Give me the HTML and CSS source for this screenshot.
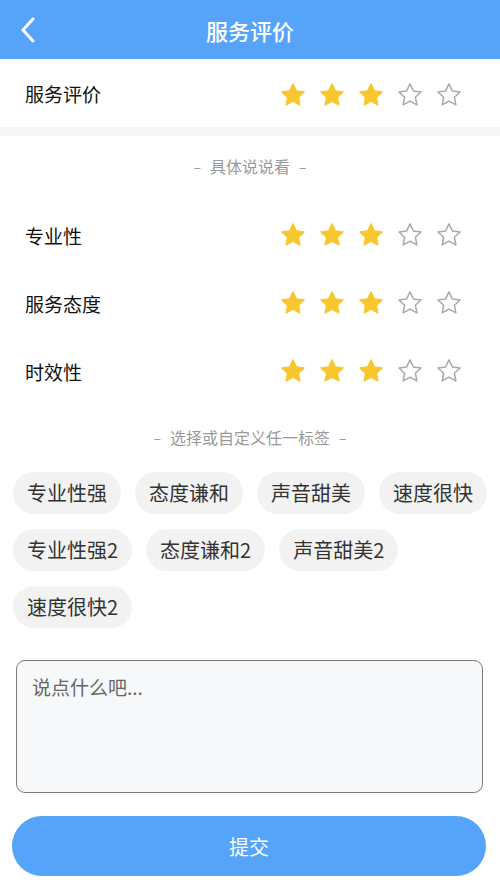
FILE: index.html
```html
<!DOCTYPE html>
<html lang="zh">
<head>
  <meta charset="UTF-8">
  <title>服务评价</title>
  <link rel="stylesheet" href="styles.css">
</head>
<body>
  <div class="header">
    <svg class="back" width="16" height="26" viewBox="0 0 16 26"><path d="M13 2 L3 13 L13 24" fill="none" stroke="#fff" stroke-width="3" stroke-linecap="round" stroke-linejoin="round"/></svg>
    <h1>服务评价</h1>
  </div>

  <div class="rate-row main-row">
    <span class="label">服务评价</span>
    <div class="stars" data-score="3"></div>
  </div>
  <div class="divider"></div>

  <div class="section-title"><span class="dash">–</span>具体说说看<span class="dash">–</span></div>
  <div class="rate-row">
    <span class="label">专业性</span>
    <div class="stars" data-score="3"></div>
  </div>
  <div class="rate-row">
    <span class="label">服务态度</span>
    <div class="stars" data-score="3"></div>
  </div>
  <div class="rate-row">
    <span class="label">时效性</span>
    <div class="stars" data-score="3"></div>
  </div>

  <div class="section-title tags-title"><span class="dash">–</span>选择或自定义任一标签<span class="dash">–</span></div>
  <div class="tags">
    <span class="tag">专业性强</span>
    <span class="tag">态度谦和</span>
    <span class="tag">声音甜美</span>
    <span class="tag">速度很快</span>
    <span class="tag">专业性强2</span>
    <span class="tag">态度谦和2</span>
    <span class="tag">声音甜美2</span>
    <span class="tag">速度很快2</span>
  </div>

  <textarea class="comment" placeholder="说点什么吧..."></textarea>
  <button type="button" class="submit">提交</button>

  <script>
    const starPts = "12,2.5 14.9,8.6 21.5,9.4 16.6,13.9 17.9,20.5 12,17.2 6.1,20.5 7.4,13.9 2.5,9.4 9.1,8.6";
    document.querySelectorAll('.stars').forEach(box => {
      const score = Number(box.dataset.score);
      let html = '';
      for (let i = 0; i < 5; i++) {
        if (i < score) {
          html += `<svg class="star" viewBox="0 0 24 24"><polygon points="${starPts}" fill="#f8c62f" stroke="#f8c62f" stroke-width="1.2" stroke-linejoin="round"/></svg>`;
        } else {
          html += `<svg class="star" viewBox="0 0 24 24"><polygon points="${starPts}" fill="none" stroke="#a9a9a9" stroke-width="1.3" stroke-linejoin="round"/></svg>`;
        }
      }
      box.innerHTML = html;
    });
  </script>
</body>
</html>
```

FILE: styles.css
```css
body { margin: 0; background: #fff; font-family: "Noto Sans CJK SC", "Noto Sans", sans-serif; color: #111; }
.header { position: relative; height: 59px; background: #55a4fa; display: flex; align-items: center; justify-content: center; }
.header h1 { margin: 0; font-size: 22px; font-weight: 500; color: #fff; }
.back { position: absolute; left: 20px; top: 17px; }
.rate-row { height: 68px; display: flex; align-items: center; justify-content: space-between; padding: 0 37px 0 25px; }
.main-row .stars { margin-top: 3px; }
.label { font-size: 19px; }
.stars { display: flex; gap: 11px; }
.star { width: 28px; height: 28px; display: block; }
.divider { height: 9px; background: #f5f6f8; }
.section-title { display: flex; justify-content: center; align-items: center; font-size: 16px; line-height: 20px; color: #999; margin: 20px 0 25px; }
.dash { margin: 0 9px; font-size: 14px; }
.tags-title { margin: 22px 0 25px; }
.tags { display: flex; flex-wrap: wrap; gap: 15px 14px; padding: 0 0 0 13px; }
.tag { height: 42px; line-height: 42px; padding: 0 14px; border-radius: 21px; background: #f2f2f2; font-size: 20px; color: #333; }
.comment { display: block; box-sizing: border-box; width: 467px; height: 133px; margin: 32px 0 0 16px; padding: 12px 15px; border: 1px solid #7a7a7a; border-radius: 9px; background: #f7f8fa; font-family: inherit; font-size: 19px; resize: none; }
.comment::placeholder { color: #666; }
.submit { display: block; width: 474px; height: 60px; margin: 23px 0 0 12px; border: none; border-radius: 30px; background: #55a4fa; color: #fff; font-family: inherit; font-size: 20px; }
```
